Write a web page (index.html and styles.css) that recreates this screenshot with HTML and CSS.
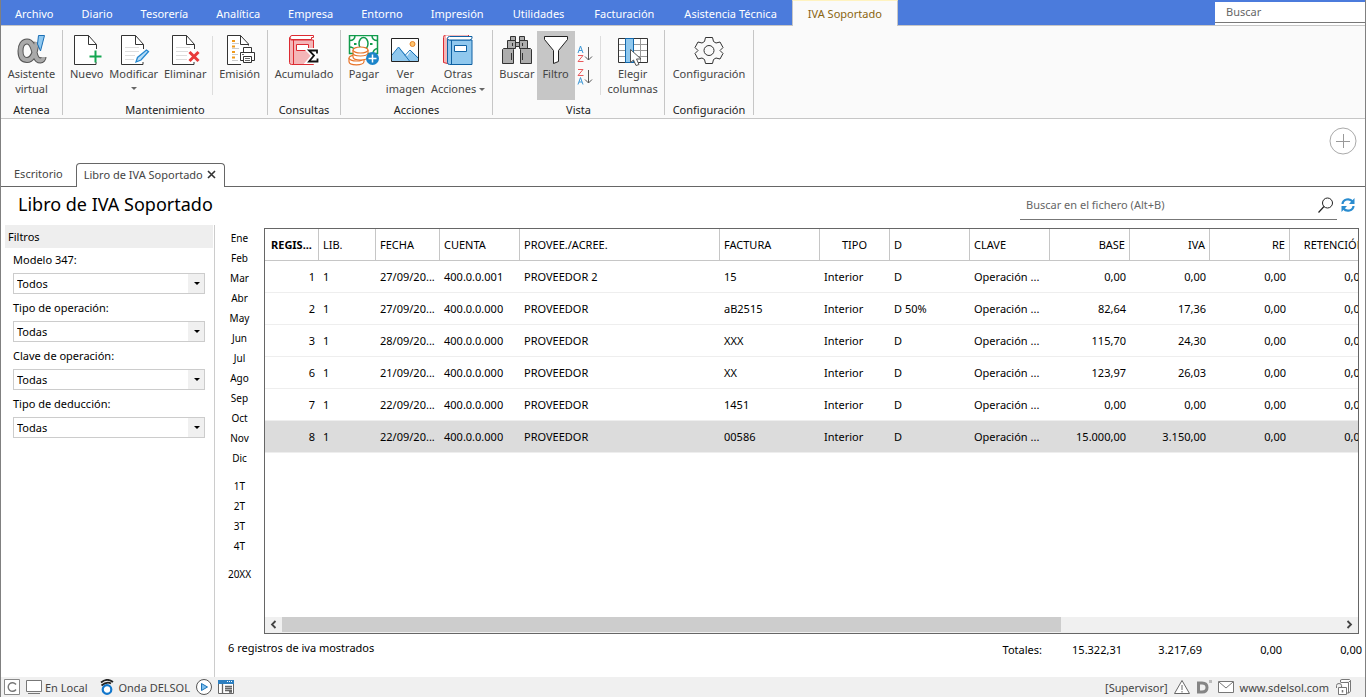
FILE: index.html
```html
<!DOCTYPE html>
<html lang="es">
<head>
<meta charset="utf-8">
<title>Libro de IVA Soportado</title>
<link rel="stylesheet" href="styles.css">
</head>
<body>
<div class="app">
  <header class="menubar">
    <nav class="menu">
      <button class="menu-item">Archivo</button>
      <button class="menu-item">Diario</button>
      <button class="menu-item">Tesorería</button>
      <button class="menu-item">Analítica</button>
      <button class="menu-item">Empresa</button>
      <button class="menu-item">Entorno</button>
      <button class="menu-item">Impresión</button>
      <button class="menu-item wide">Utilidades</button>
      <button class="menu-item wide">Facturación</button>
      <button class="menu-item wide">Asistencia Técnica</button>
      <button class="menu-item wide active">IVA Soportado</button>
    </nav>
    <div class="menu-search"><input type="text" placeholder="Buscar" aria-label="Buscar"></div>
  </header>

  <section class="ribbon">
    <div class="group g-atenea">
      <div class="tools">
        <button class="tool">
          <svg width="32" height="32" viewBox="0 0 32 32"><path d="M20.500 7c-1 10-4 18-9.500 18-4.500 0-6.500-3.500-6.500-9s2.500-9.500 6.500-9.500c6 0 6.500 8.500 8.500 14.500 1 3 2.500 4.500 5 4.500 1.500 0 3-1.500 3-3.500" fill="none" stroke="#555" stroke-width="6"/><path d="M20.500 7c-1 10-4 18-9.500 18-4.500 0-6.500-3.500-6.500-9s2.500-9.500 6.500-9.500c6 0 6.500 8.500 8.500 14.500 1 3 2.500 4.500 5 4.500 1.500 0 3-1.500 3-3.500" fill="none" stroke="#aaa" stroke-width="4"/><path d="M22.500.5h6L24.500 16l-3-7z" fill="#8fc8f0" stroke="#1b6fb5"/></svg>
          <span>Asistente<br>virtual</span>
        </button>
      </div>
      <h2>Atenea</h2>
    </div>

    <div class="group g-mant">
      <div class="tools">
        <button class="tool">
          <svg width="32" height="32" viewBox="0 0 32 32"><path d="M25.500 14V9.500L17.500.5h-14v29h21.500V27" fill="#fff" stroke="#333"/><path d="M17.500.5v9h8" fill="none" stroke="#333"/><path d="M18.500 21.500h12M24.500 15.500v12" stroke="#13a650" stroke-width="2"/></svg>
          <span>Nuevo</span>
        </button>
        <button class="tool">
          <svg width="32" height="32" viewBox="0 0 32 32"><path d="M25.500 14V9.500L17.500.5h-14v29h21.500V27" fill="#fff" stroke="#333"/><path d="M17.500.5v9h8" fill="none" stroke="#333"/><path d="M7 12.500h14M7 16.500h14M7 20.500h10M7 24.500h9" stroke="#ddd"/><path d="M18 27l1.500-4.500 9-7.500 2 1.500-7.500 8.500z" fill="#b8def8" stroke="#2487cf" stroke-width="1.300"/></svg>
          <span>Modificar</span><i class="caret"></i>
        </button>
        <button class="tool">
          <svg width="32" height="32" viewBox="0 0 32 32"><path d="M25.500 14V9.500L17.500.5h-14v29h21.500V27" fill="#fff" stroke="#333"/><path d="M17.500.5v9h8" fill="none" stroke="#333"/><path d="M7 12.500h14M7 16.500h12M7 20.500h11M7 24.500h11" stroke="#ddd"/><path d="M20.500 17l9 9M29.500 17l-9 9" stroke="#e83a3a" stroke-width="3"/></svg>
          <span>Eliminar</span>
        </button>
        <div class="sep"></div>
        <button class="tool">
          <svg width="32" height="32" viewBox="0 0 32 32"><path d="M24.500 10.500V9L16.500.5h-13v29H17" fill="#fff" stroke="#333"/><path d="M16.500.5v9h8" fill="none" stroke="#333"/><path d="M8 6h3M8 11.500h3M8 17h3M8 22.500h3" stroke="#f09a1a" stroke-width="2"/><path d="M8 8.500h7M8 13.500h7M8 19.500h6M8 25.500h6" stroke="#ccc"/><path d="M19.500 17.500v-5h8v5M19.500 25.500h-3v-8h14v8h-3M19.500 21.500h8v6h-8z" fill="#fff" stroke="#333"/><path d="M21 23.500h5M21 25.500h5M18 19.500h2" stroke="#666"/></svg>
          <span>Emisión</span>
        </button>
      </div>
      <h2>Mantenimiento</h2>
    </div>

    <div class="group g-cons">
      <div class="tools">
        <button class="tool">
          <svg width="32" height="32" viewBox="0 0 32 32"><path d="M3.500 1c-3 1-2 4 0 4h22v24.500h-22q-2 0-2-2V3" fill="#f4b6b8" stroke="#dc2b32"/><path d="M2 3q0-2.500 2-2.500h21.500v2h-2v2H4Q2 4.500 2 3z" fill="#fff" stroke="#dc2b32"/><path d="M5.500 5v24.500" stroke="#dc2b32"/><path d="M8.500 9.500h12v6h-12z" fill="#fff" stroke="#dc2b32"/><path d="M29 18.500v-3h-8l5 5-5 6h8.500v-3" fill="none" stroke="#fff" stroke-width="5"/><path d="M29 18.500v-3h-8l5 5-5 6h8.500v-3" fill="none" stroke="#111" stroke-width="1.800"/></svg>
          <span>Acumulado</span>
        </button>
      </div>
      <h2>Consultas</h2>
    </div>

    <div class="group g-acc">
      <div class="tools">
        <button class="tool">
          <svg width="32" height="32" viewBox="0 0 32 32"><path d="M1.500.5h28v18h-28z" fill="#fff" stroke="#129b4c" stroke-width="1.500"/><path d="M7 .5q0 5-5.500 5M24 .5q0 5 5.500 5M25 18.500q0-4 4.500-5M1.500 12q4 0 5 3" fill="none" stroke="#129b4c" stroke-width="1.500"/><ellipse cx="15.500" cy="8.500" rx="4.500" ry="6" fill="none" stroke="#129b4c" stroke-width="1.500"/><path d="M6 9h2.500M22 9h2.500" stroke="#129b4c" stroke-width="2"/><g fill="#fff" stroke="#e8742a" stroke-width="1.200"><path d="M1 23v3.500c0 4.500 15 4.500 15 0V23"/><ellipse cx="8.500" cy="23" rx="7.500" ry="3"/><path d="M5 19v3c0 4 15 4 15 0v-3"/><path d="M5 15v3c0 4 15 4 15 0v-3"/><ellipse cx="12.500" cy="15" rx="7.500" ry="3"/></g><circle cx="24.500" cy="23.500" r="6.500" fill="#1b84c9"/><path d="M20.500 23.500h8M24.500 19.500v8" stroke="#fff" stroke-width="1.500"/></svg>
          <span>Pagar</span>
        </button>
        <button class="tool">
          <svg width="32" height="32" viewBox="0 0 32 32"><path d="M2.500 3.500h27v23h-27z" fill="#fff"/><path d="M3 20l7-8 8 9 4-5.500 7.500 7v4H3z" fill="#90c8ee"/><path d="M3 20l6.500-8 11 14M16 20.500l5-5.500 8.500 8.500" fill="none" stroke="#1b74b8"/><circle cx="23.500" cy="9" r="2.500" fill="#ffc56e" stroke="#e8842a"/><path d="M2.500 3.500h27v23h-27z" fill="none" stroke="#222"/></svg>
          <span>Ver<br>imagen</span>
        </button>
        <button class="tool">
          <svg width="32" height="32" viewBox="0 0 32 32"><path d="M1.500 27.500v-25q0-3 3-3h22v4h-3l-18 1v24z" fill="#f4b6b8" stroke="#dc2b32"/><path d="M4 1h21v2H4z" fill="#fff"/><path d="M7.500 5h22.500v24.500h-22.500q-2 0-2-2V4" fill="#90c8ee" stroke="#0f61a3"/><path d="M5.500 3.500q0-2 2-2H30v2l-2 1.500H7.500q-2 0-2-1.500z" fill="#fff" stroke="#0f61a3"/><path d="M9.500 5v24.500" stroke="#0f61a3"/><path d="M12.500 10.500h12v6h-12z" fill="#fff" stroke="#0f61a3"/></svg>
          <span>Otras<br>Acciones <i class="caret inline"></i></span>
        </button>
      </div>
      <h2>Acciones</h2>
    </div>

    <div class="group g-vista">
      <div class="tools">
        <button class="tool">
          <svg width="32" height="32" viewBox="0 0 32 32"><g fill="#adadad" stroke="#333"><path d="M9.500 1.500h5v4h-5zM18.500 1.500h5v4h-5z"/><path d="M6.500 5.500h8v8h-8zM18.500 5.500h8v8h-8zM14.500 7.500h4v4h-4z"/><path d="M1.500 14.500l1-1h9l1 1v14h-11zM19.500 14.500l1-1h9l1 1v14h-11z"/></g><path d="M10.500 18v7M21.500 18v7M11.500 8v3M21.500 8v3" stroke="#333"/></svg>
          <span>Buscar</span>
        </button>
        <button class="tool pressed" aria-pressed="true">
          <svg width="32" height="32" viewBox="0 0 32 32"><path d="M4.500 1.500h23v3l-9 11v11l-5 2v-13l-9-11z" fill="#fff" stroke="#222"/></svg>
          <span>Filtro</span>
        </button>
        <div class="sorts">
          <button aria-label="Orden ascendente"><svg width="16" height="18" viewBox="0 0 16 18"><path d="M1 8l2.500-7L6 8M2 5.500h3" fill="none" stroke="#3c97d6"/><path d="M1 10.500h5l-5 6h5.500" fill="none" stroke="#e8595c"/><path d="M11.500 2v13M8 11.500l3.500 3.500 3.500-3.500" fill="none" stroke="#555"/></svg></button>
          <button aria-label="Orden descendente"><svg width="16" height="18" viewBox="0 0 16 18"><path d="M1 1.500h5l-5 6h5.500" fill="none" stroke="#e8595c"/><path d="M1 16.500l2.500-7 2.500 7M2 14h3" fill="none" stroke="#3c97d6"/><path d="M11.500 2v13M8 11.500l3.500 3.500 3.500-3.500" fill="none" stroke="#555"/></svg></button>
        </div>
        <div class="sep"></div>
        <button class="tool">
          <svg width="32" height="32" viewBox="0 0 32 32"><path d="M1.500 3.500h29v24h-29z" fill="#fff"/><path d="M2 9.500h28M2 15.500h28M2 21.500h28M23.500 4v23" stroke="#999"/><path d="M1.500 3.500h29v24h-29z" fill="none" stroke="#333"/><path d="M8.500 3.500h8v24h-8z" fill="#90c8ee" stroke="#1168ad"/><path d="M13.500 14.500v13l3-2.500 2.500 5.500 3-1-2.500-5.500h4.500z" fill="#fff" stroke="#555"/></svg>
          <span>Elegir<br>columnas</span>
        </button>
      </div>
      <h2>Vista</h2>
    </div>

    <div class="group g-conf">
      <div class="tools">
        <button class="tool">
          <svg width="32" height="32" viewBox="0 0 32 32"><path d="M12.500 2.500h7l1 4 2.500 1.500 4-1 3 5.500-3 3v0l3 3-3 5.500-4-1-2.500 1.500-1 4h-7l-1-4L9 23l-4 1-3-5.500 3-3-3-3L5 7l4 1 2.500-1.500z" fill="#fafafa" stroke="#333"/><circle cx="16" cy="15.500" r="5" fill="none" stroke="#333"/></svg>
          <span>Configuración</span>
        </button>
      </div>
      <h2>Configuración</h2>
    </div>
  </section>

  <section class="docbar">
    <nav class="doctabs">
      <button class="doctab">Escritorio</button>
      <button class="doctab current">Libro de IVA Soportado <svg width="9" height="9" viewBox="0 0 9 9"><path d="M1 1l7 7M8 1L1 8" stroke="#333" stroke-width="1.600"/></svg></button>
    </nav>
    <button class="add" aria-label="Añadir"><svg width="28" height="28" viewBox="0 0 28 28"><circle cx="14" cy="14" r="13" fill="#fff" stroke="#aaa"/><path d="M7 14.500h14M14.500 7v14" stroke="#999"/></svg></button>
  </section>

  <section class="titlebar">
    <h1>Libro de IVA Soportado</h1>
    <div class="file-search">
      <input type="text" placeholder="Buscar en el fichero (Alt+B)" aria-label="Buscar en el fichero">
      <button aria-label="Buscar"><svg width="16" height="16" viewBox="0 0 16 16"><circle cx="9.500" cy="6" r="5" fill="none" stroke="#222"/><path d="M6 9.500L.5 15.500" stroke="#222" stroke-width="1.200"/></svg></button>
    </div>
    <button class="refresh" aria-label="Actualizar"><svg width="16" height="16" viewBox="0 0 16 16"><path d="M2.500 7a5.500 5 0 0 1 10-2.500M13.500 9a5.500 5 0 0 1-10 2.500" fill="none" stroke="#2a8ccf" stroke-width="2.200"/><path d="M14.500 1v6H9zM1.500 15V9H7z" fill="#2a8ccf"/></svg></button>
  </section>

  <main class="content">
    <aside class="filters">
      <h2>Filtros</h2>
      <form>
        <label for="f1">Modelo 347:</label>
        <div class="combo"><select id="f1"><option>Todos</option></select></div>
        <label for="f2">Tipo de operación:</label>
        <div class="combo"><select id="f2"><option>Todas</option></select></div>
        <label for="f3">Clave de operación:</label>
        <div class="combo"><select id="f3"><option>Todas</option></select></div>
        <label for="f4">Tipo de deducción:</label>
        <div class="combo"><select id="f4"><option>Todas</option></select></div>
      </form>
    </aside>

    <nav class="periods">
      <div><button>Ene</button><button>Feb</button><button>Mar</button><button>Abr</button><button>May</button><button>Jun</button><button>Jul</button><button>Ago</button><button>Sep</button><button>Oct</button><button>Nov</button><button>Dic</button></div>
      <div><button>1T</button><button>2T</button><button>3T</button><button>4T</button></div>
      <div><button>20XX</button></div>
    </nav>

    <div class="book">
      <div class="grid">
        <div class="viewport">
          <table>
            <colgroup><col class="w-reg"><col class="w-lib"><col class="w-date"><col class="w-std"><col class="w-name"><col class="w-inv"><col class="w-type"><col class="w-std"><col class="w-std"><col class="w-std"><col class="w-std"><col class="w-std"><col class="w-std"></colgroup>
            <thead><tr><th class="sorted">REGIS...</th><th>LIB.</th><th>FECHA</th><th>CUENTA</th><th>PROVEE./ACREE.</th><th>FACTURA</th><th class="c">TIPO</th><th>D</th><th>CLAVE</th><th class="n">BASE</th><th class="n">IVA</th><th class="n">RE</th><th class="n">RETENCIÓN</th></tr></thead>
            <tbody>
              <tr><td class="n">1</td><td>1</td><td>27/09/20...</td><td>400.0.0.001</td><td>PROVEEDOR 2</td><td>15</td><td>Interior</td><td>D</td><td>Operación ...</td><td class="n">0,00</td><td class="n">0,00</td><td class="n">0,00</td><td class="n">0,00</td></tr>
              <tr><td class="n">2</td><td>1</td><td>27/09/20...</td><td>400.0.0.000</td><td>PROVEEDOR</td><td>aB2515</td><td>Interior</td><td>D 50%</td><td>Operación ...</td><td class="n">82,64</td><td class="n">17,36</td><td class="n">0,00</td><td class="n">0,00</td></tr>
              <tr><td class="n">3</td><td>1</td><td>28/09/20...</td><td>400.0.0.000</td><td>PROVEEDOR</td><td>XXX</td><td>Interior</td><td>D</td><td>Operación ...</td><td class="n">115,70</td><td class="n">24,30</td><td class="n">0,00</td><td class="n">0,00</td></tr>
              <tr><td class="n">6</td><td>1</td><td>21/09/20...</td><td>400.0.0.000</td><td>PROVEEDOR</td><td>XX</td><td>Interior</td><td>D</td><td>Operación ...</td><td class="n">123,97</td><td class="n">26,03</td><td class="n">0,00</td><td class="n">0,00</td></tr>
              <tr><td class="n">7</td><td>1</td><td>22/09/20...</td><td>400.0.0.000</td><td>PROVEEDOR</td><td>1451</td><td>Interior</td><td>D</td><td>Operación ...</td><td class="n">0,00</td><td class="n">0,00</td><td class="n">0,00</td><td class="n">0,00</td></tr>
              <tr class="selected"><td class="n">8</td><td>1</td><td>22/09/20...</td><td>400.0.0.000</td><td>PROVEEDOR</td><td>00586</td><td>Interior</td><td>D</td><td>Operación ...</td><td class="n">15.000,00</td><td class="n">3.150,00</td><td class="n">0,00</td><td class="n">0,00</td></tr>
            </tbody>
          </table>
        </div>
        <div class="scroll">
          <button aria-label="Desplazar a la izquierda"><svg width="7" height="9" viewBox="0 0 7 9"><path d="M5.500 1L2 4.500 5.500 8" fill="none" stroke="#444" stroke-width="1.800"/></svg></button>
          <div class="track"><div class="thumb"></div></div>
          <button aria-label="Desplazar a la derecha"><svg width="7" height="9" viewBox="0 0 7 9"><path d="M1.500 1L5 4.500 1.500 8" fill="none" stroke="#444" stroke-width="1.800"/></svg></button>
        </div>
      </div>
      <div class="summary">
        <span class="count">6 registros de iva mostrados</span>
        <div class="totals"><span>Totales:</span><span>15.322,31</span><span>3.217,69</span><span>0,00</span><span>0,00</span></div>
      </div>
    </div>
  </main>

  <footer class="status">
    <svg width="16" height="16" viewBox="0 0 16 16"><path d="M.5.5h15v15H.5z" fill="#fff" stroke="#888"/><path d="M12 5.500a4.300 4.300 0 1 0 0 5" fill="none" stroke="#777" stroke-width="1.400"/></svg>
    <svg class="gap-s" width="16" height="16" viewBox="0 0 16 16"><path d="M.5 1.500h15v11H.5z" fill="#fff" stroke="#777"/><path d="M2 14.500h12" stroke="#777"/></svg>
    <span>En Local</span>
    <svg class="gap-m" width="16" height="16" viewBox="0 0 16 16"><path d="M2 3.500Q8-1.500 14 3M2.500 6.500Q8 2 12 4.500" fill="none" stroke="#222" stroke-width="1.800"/><circle cx="8" cy="10.500" r="4.300" fill="#fff" stroke="#1277cc" stroke-width="2.200"/></svg>
    <span>Onda DELSOL</span>
    <svg class="gap-s" width="16" height="16" viewBox="0 0 16 16"><circle cx="8" cy="8" r="7.500" fill="#fff" stroke="#555"/><path d="M5.500 4.500v7l6-3.500z" fill="#7ebff0" stroke="#1b74b8"/></svg>
    <svg class="gap-s" width="16" height="16" viewBox="0 0 16 16"><path d="M.5 1.500h15v13H.5z" fill="#fff" stroke="#666"/><path d="M0 1h16v4H0z" fill="#2d7fc0"/><path d="M9 2.500h6" stroke="#fff" stroke-dasharray="1 1"/><path d="M4.500 5v9M7 7.500h7M7 9.500h7M7 11.500h7M11 13h3" stroke="#666" stroke-width="1.300"/></svg>
    <span class="spacer"></span>
    <span>[Supervisor]</span>
    <svg class="gap-s" width="16" height="16" viewBox="0 0 16 16"><path d="M8 1.500l7.500 13H.5z" fill="#fff" stroke="#666"/><path d="M8 6v5M8 12v1.500" stroke="#666"/></svg>
    <svg class="gap-s" width="16" height="16" viewBox="0 0 16 16"><path d="M2.500 4h3.500q5 0 5 4.500T6 13H2.500z" fill="none" stroke="#858585" stroke-width="3"/><path d="M13 1h3v3h-3z" fill="#bbb"/></svg>
    <svg class="gap-s" width="16" height="16" viewBox="0 0 16 16"><path d="M.5 2.500h15v11H.5z" fill="#fff" stroke="#777"/><path d="M1 3l7 6 7-6" fill="none" stroke="#777"/></svg>
    <a class="gap-s" href="#">www.sdelsol.com</a>
    <svg class="gap-s" width="16" height="16" viewBox="0 0 16 16"><path d="M5.500 3V1l1.500-.5h7.500l1 1v11l-2 1.500H12M5.500 3.500h8l2-2M13.500 3.500V14" fill="#fff" stroke="#777"/><path d="M1.500 9V6.500q0-2 2.500-2t2.500 2V9" fill="none" stroke="#777"/><path d="M3.500 8.500h8v7h-8z" fill="#fff" stroke="#777"/><path d="M7.500 11v2.500" stroke="#777" stroke-width="1.500"/></svg>
  </footer>
</div>
</body>
</html>
```
FILE: styles.css
```css
* { box-sizing: border-box; }
body {
  margin: 0;
  font: 11px/15px "Noto Sans", "Open Sans", sans-serif;
  color: #000;
  background: #fff;
}
button, input, select { font: inherit; color: inherit; }
button { border: 0; background: none; padding: 0; }
h1, h2 { margin: 0; font-weight: 400; }
svg { display: block; flex: none; }

.app {
  display: flex;
  flex-direction: column;
  min-height: 100vh;
  border: solid #808080;
  border-width: 0 1px;
}

/* Menu bar */
.menubar {
  display: flex;
  height: 26px;
  background: #4b7bdc;
  border-bottom: 1px solid #c6c6c6;
}
.menu { display: flex; flex: 1; }
.menu-item { padding: 2px 14px 0; color: #fff; white-space: nowrap; }
.menu-item.wide { padding-right: 15px; padding-left: 15px; }
.menu-item.active {
  height: 26px;
  padding-top: 0;
  background: #fafafa;
  color: #8a6510;
  border: solid #c6c6c6;
  border-width: 1px 1px 0;
  border-top-color: #fff3c0;
}
.menu-search { width: 150px; margin-top: 2px; background: #fff; }
.menu-search input {
  display: block;
  width: 100%;
  height: 21px;
  border: 0;
  border-bottom: 1px solid #777;
  padding: 0 11px 2px;
  outline: 0;
}
input::placeholder { color: #666; opacity: 1; }

/* Ribbon */
.ribbon {
  display: flex;
  background: #fafafa;
  border-bottom: 1px solid #c6c6c6;
  color: #444;
}
.group {
  display: flex;
  flex-direction: column;
  margin: 4px 0 3px;
  border-right: 1px solid #c6c6c6;
}
.group h2 {
  height: 14px;
  font-size: 11px;
  line-height: 17px;
  text-align: center;
  color: #222;
}
.tools { display: flex; height: 71px; padding: 1px 0; justify-content: center; }
.tool {
  display: flex;
  flex-direction: column;
  align-items: center;
  padding-top: 4px;
  white-space: nowrap;
}
.tool svg { margin-bottom: -1px; }
.pressed { width: 38px; background: #c6c6c6; }
.sep { width: 1px; margin: 5px 0; background: #ddd; }
.caret {
  width: 0;
  margin-top: 6px;
  border: 3px solid transparent;
  border-top-color: #666;
  border-bottom: 0;
}
.caret.inline { display: inline-block; margin: 0 0 2px; }
.g-atenea { width: 62px; }
.g-mant { width: 205px; }
.g-mant .tools { justify-content: space-between; padding-right: 7px; padding-left: 7px; }
.g-cons { width: 73px; }
.g-acc { width: 152px; }
.g-acc .tools { gap: 6px; }
.g-vista { width: 172px; }
.g-vista .tools { gap: 2px; }
.g-vista .sep { margin: 5px; }
.g-conf { width: 89px; }
.sorts { display: flex; flex-direction: column; justify-content: center; gap: 5px; }

/* Document tabs */
.docbar {
  display: flex;
  justify-content: space-between;
  height: 68px;
  border-bottom: 1px solid #666;
}
.doctabs { display: flex; align-items: flex-end; color: #444; }
.doctab { height: 24px; padding: 0 13px 2px; }
.doctab.current {
  display: flex;
  align-items: center;
  gap: 4px;
  margin-bottom: -1px;
  padding: 0 8px 3px 7px;
  background: #fff;
  border: 1px solid #666;
  border-bottom: 0;
  border-radius: 4px 4px 0 0;
}
.add { align-self: flex-start; margin: 8px 8px 0 0; }

/* Title */
.titlebar { display: flex; align-items: center; height: 38px; padding: 0 9px 2px 0; }
h1 { flex: 1; padding: 0 0 2px 17px; font-size: 18px; line-height: 24px; }
.file-search {
  display: flex;
  align-items: center;
  width: 317px;
  height: 30px;
  border-bottom: 1px solid #777;
}
.file-search input { flex: 1; border: 0; padding: 0 6px; outline: 0; background: none; }
.file-search button { margin-right: 3px; }
.refresh { margin-left: 3px; }

/* Content */
.content { display: flex; flex: 1; }
.filters { width: 214px; padding-left: 4px; border-right: 1px solid #ccc; }
.filters h2 {
  margin-right: 1px;
  padding: 4px 3px;
  font-size: 11px;
  background: #eee;
}
.filters form { padding: 4px 9px 0 8px; }
.filters label { display: block; height: 21px; }
.combo { position: relative; margin-bottom: 6px; }
.combo select {
  display: block;
  width: 100%;
  height: 21px;
  border: 1px solid #ccc;
  border-radius: 0;
  padding: 0 3px;
  background: #fff;
  appearance: none;
}
.combo::before {
  content: "";
  position: absolute;
  top: 1px;
  right: 1px;
  bottom: 1px;
  width: 16px;
  background: #f0f0f0;
  pointer-events: none;
}
.combo::after {
  content: "";
  position: absolute;
  top: 9px;
  right: 5px;
  border: 3px solid transparent;
  border-top-color: #000;
  border-bottom: 0;
  pointer-events: none;
}

.periods {
  display: flex;
  flex-direction: column;
  gap: 8px;
  width: 49px;
  padding-top: 3px;
  font-size: 10px;
}
.periods button { display: block; width: 100%; height: 20px; }

.book { display: flex; flex-direction: column; flex: 1; min-width: 0; }
.grid {
  display: flex;
  flex-direction: column;
  flex: 1;
  margin: 3px 6px 0 0;
  border: 1px solid #666;
}
.viewport { flex: 1; overflow: hidden; }
table {
  width: 1105px;
  table-layout: fixed;
  border-collapse: separate;
  border-spacing: 0;
  font-size: 11px;
}
.w-reg { width: 54px; }
.w-lib { width: 57px; }
.w-date { width: 64px; }
.w-std { width: 80px; }
.w-name { width: 200px; }
.w-inv { width: 100px; }
.w-type { width: 70px; }
th, td {
  height: 32px;
  padding: 0 4px;
  text-align: left;
  font-weight: 400;
  white-space: nowrap;
  border-bottom: 1px solid #eee;
}
th { border-right: 1px solid #c6c6c6; border-bottom-color: #c6c6c6; }
th.sorted { padding-left: 6px; font-weight: 700; }
.n { text-align: right; }
.c { text-align: center; }
.selected td { background: #dcdcdc; }

.scroll { display: flex; height: 16px; padding-bottom: 1px; background: #f0f0f0; }
.scroll button { display: grid; place-items: center; width: 17px; }
.track { flex: 1; }
.thumb { width: 73.6%; height: 15px; background: #cdcdcd; }

.summary {
  display: flex;
  justify-content: space-between;
  height: 43px;
  margin-left: -36px;
  padding: 6px 3px 0 0;
}
.totals { display: flex; padding-top: 2px; text-align: right; }
.totals span { width: 80px; }

/* Status bar */
.status {
  display: flex;
  align-items: center;
  gap: 3px;
  height: 20px;
  padding: 0 14px 0 3px;
  background: #f0f0f0;
  color: #444;
}
.status a { color: inherit; text-decoration: none; }
.spacer { flex: 1; }
.gap-s { margin-left: 3px; }
.gap-m { margin-left: 9px; }
```
